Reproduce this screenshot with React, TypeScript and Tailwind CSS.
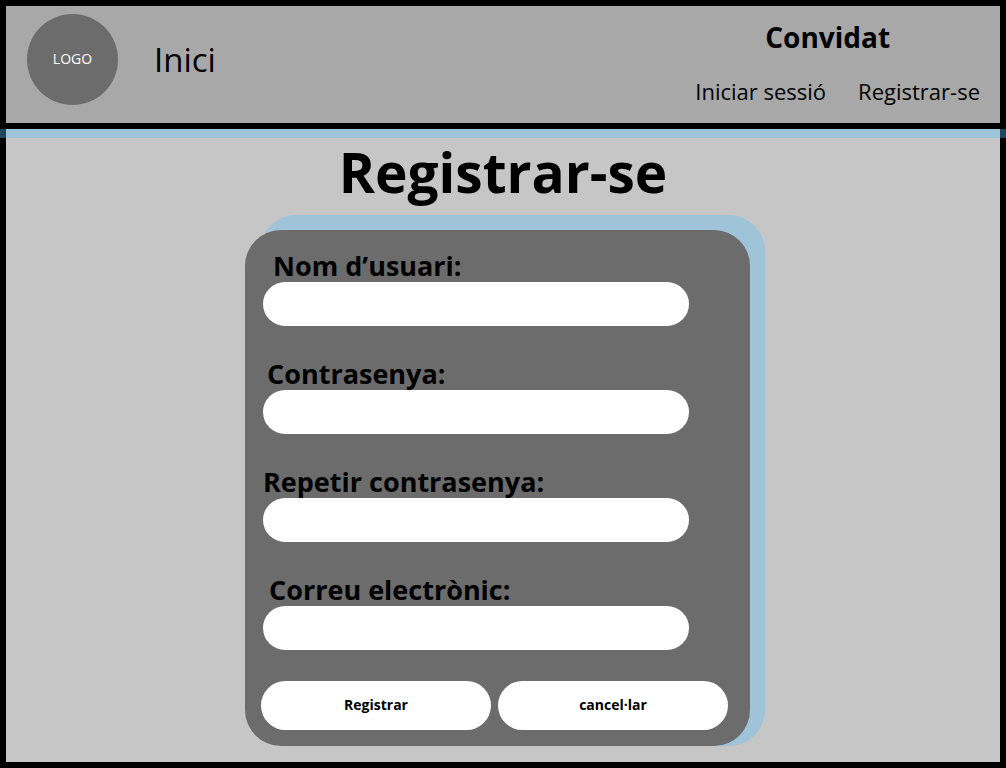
type Field = {
  id: string;
  label: string;
  type: string;
  indent: string;
};

const fields: Field[] = [
  { id: "username", label: "Nom d’usuari:", type: "text", indent: "pl-2.5" },
  { id: "password", label: "Contrasenya:", type: "password", indent: "pl-1" },
  { id: "password-repeat", label: "Repetir contrasenya:", type: "password", indent: "pl-0" },
  { id: "email", label: "Correu electrònic:", type: "email", indent: "pl-1.5" },
];

function Header() {
  return (
    <header className="flex h-[123px] items-start justify-between border-b-6 border-black bg-[#a8a8a8] pr-5 pl-[21px]">
      <div className="flex items-center gap-9 pt-2">
        <div className="flex size-[91px] items-center justify-center rounded-full bg-[#6c6c6c] pb-0.5 text-sm text-white">
          LOGO
        </div>
        <a href="#inici" className="text-[33px] leading-10">
          Inici
        </a>
      </div>
      <div className="flex flex-col items-center gap-5 pt-[11px]">
        <p className="pr-5 text-[28px] leading-10 font-bold">Convidat</p>
        <nav className="flex gap-8 text-[22px] leading-7">
          <a href="#iniciar-sessio">Iniciar sessió</a>
          <a href="#registrar-se">Registrar-se</a>
        </nav>
      </div>
    </header>
  );
}

function RegisterForm() {
  return (
    <div className="relative w-full max-w-[520px] pt-[15px] pr-[15px]">
      <div className="absolute inset-y-0 right-0 left-[15px] rounded-[36px] bg-[#9fc4d9]" />
      <form className="relative rounded-[36px] bg-[#6c6c6c] pt-5 pr-[22px] pb-4 pl-4">
        <div className="flex flex-col gap-8 pl-0.5">
          {fields.map((field) => (
            <div key={field.id} className="flex flex-col">
              <label
                htmlFor={field.id}
                className={`${field.indent} relative z-10 text-[27px] leading-8 font-bold`}
              >
                {field.label}
              </label>
              <input
                id={field.id}
                name={field.id}
                type={field.type}
                className="h-11 w-full max-w-[426px] rounded-full bg-white px-5 text-lg outline-none"
              />
            </div>
          ))}
        </div>
        <div className="mt-[31px] grid grid-cols-2 gap-[7px] text-sm font-bold">
          <button type="submit" className="h-[49px] rounded-full bg-white pb-0.5">
            Registrar
          </button>
          <button type="button" className="h-[49px] rounded-full bg-white pb-0.5">
            cancel·lar
          </button>
        </div>
      </form>
    </div>
  );
}

export default function App() {
  return (
    <div className="min-h-screen border-6 border-black bg-[#c6c6c6] font-['Open_Sans',sans-serif] text-black">
      <Header />
      <div className="-mx-1.5 h-[9px] bg-[#56c1fb]/36" />
      <main className="flex flex-col items-center pb-4">
        <h1 className="mb-[9px] text-[55px] leading-[68px] font-bold">Registrar-se</h1>
        <div className="flex w-full justify-center pl-1">
          <RegisterForm />
        </div>
      </main>
    </div>
  );
}
